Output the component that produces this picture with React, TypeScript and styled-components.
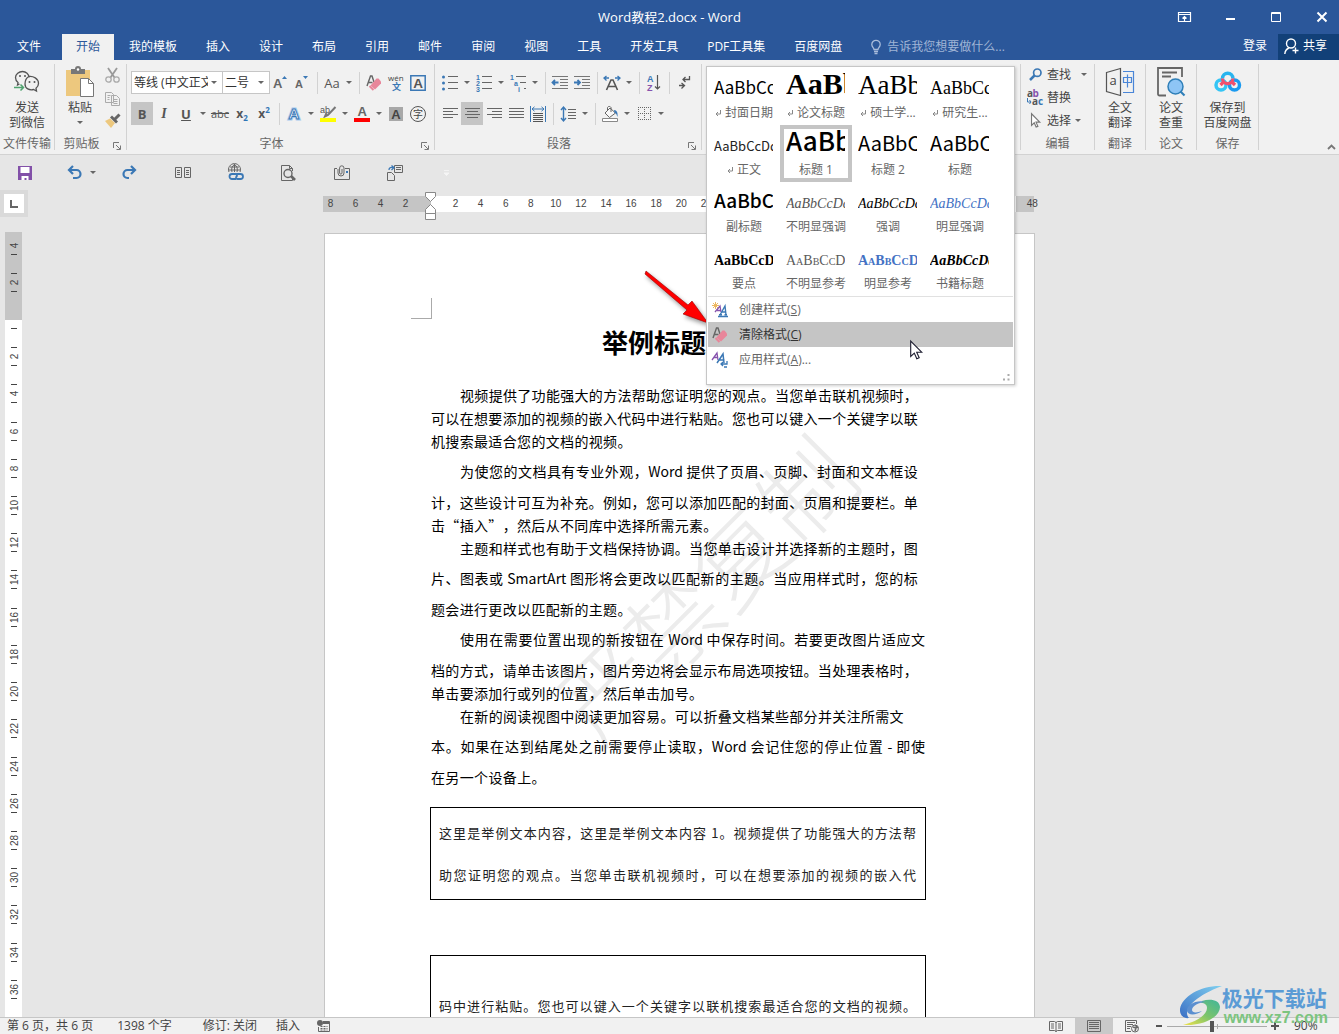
import React from 'react';
import styled, { createGlobalStyle, css } from 'styled-components';

const UI = '"Open Sans", "Noto Sans CJK SC", sans-serif';
const CJK = '"Noto Sans CJK SC", sans-serif';
const SERIF = '"Liberation Serif", "Noto Sans CJK SC", serif';

const Global = createGlobalStyle`
  *, *::before, *::after { box-sizing: border-box; }
  body { margin: 0; font: 12px/16px ${UI}; color: #444; background: #e6e6e6; overflow: hidden; }
  button, input, select { font: inherit; color: inherit; margin: 0; }
  button { padding: 0; border: 0; background: none; white-space: nowrap; }
  svg { display: block; flex: none; overflow: visible; }
  h1, p { margin: 0; }
`;

const Shell = styled.div`
  display: flex;
  flex-direction: column;
  height: 100vh;
  position: relative;
`;

/* ---------- title bar and tabs ---------- */

const TitleBar = styled.header`
  display: grid;
  grid-template-columns: 1fr auto 1fr;
  align-items: center;
  height: 34px;
  background: #2b579a;
  color: #fff;
`;
const Title = styled.span`
  grid-column: 2;
  font-size: 13px;
`;
const WindowButtons = styled.div`
  display: flex;
  justify-content: flex-end;
  gap: 12px;
`;
const WindowButton = styled.button`
  display: grid;
  place-items: center;
  width: 34px;
  height: 32px;
  color: #fff;
`;
const TabBar = styled.nav`
  display: flex;
  align-items: stretch;
  gap: 1px;
  height: 26px;
  padding-left: 3px;
  background: #2b579a;
  color: #fff;
`;
const Tab = styled.button<{ $active?: boolean; $file?: boolean }>`
  padding: 0 14px 1px;
  color: ${p => (p.$active ? '#2b579a' : '#fff')};
  background: ${p => (p.$active ? '#f1f1f1' : 'transparent')};
  margin-right: ${p => (p.$file ? 6 : 0)}px;
`;
const Search = styled.label`
  display: flex;
  align-items: center;
  gap: 6px;
  margin-left: 14px;
  color: #a9bcdb;
`;
const SearchInput = styled.input`
  width: 150px;
  padding: 0;
  border: 0;
  outline: 0;
  background: none;
  &::placeholder { color: #a0b5d6; opacity: 1; }
`;
const Account = styled.div`
  display: flex;
  margin-left: auto;
  gap: 11px;
`;
const PlainButton = styled.button`
  padding-bottom: 2px;
`;
const ShareButton = styled.button`
  display: flex;
  align-items: center;
  gap: 4px;
  width: 61px;
  padding: 0 0 2px 6px;
  background: #124078;
`;

/* ---------- ribbon ---------- */

const Ribbon = styled.section`
  display: flex;
  height: 95px;
  padding: 4px 0;
  background: #f1f1f1;
  border-bottom: 1px solid #d2d2d2;
`;
const Group = styled.div<{ $w: number }>`
  display: flex;
  flex-direction: column;
  position: relative;
  flex: 0 0 ${p => p.$w}px;
  height: 86px;
  border-right: 1px solid #d2d2d2;
`;
const GroupBody = styled.div`
  display: flex;
  flex: 1;
`;
const GroupFoot = styled.div`
  display: flex;
  height: 14px;
  margin-bottom: -1px;
  line-height: 14px;
  color: #666;
  white-space: nowrap;
`;
const GroupName = styled.span`
  flex: 1;
  display: flex;
  justify-content: center;
`;
const Launcher = styled.button`
  width: 18px;
  display: grid;
  place-items: center;
  padding-top: 4px;
`;
const BigButton = styled.button<{ $w?: number }>`
  display: flex;
  flex-direction: column;
  align-items: center;
  width: ${p => (p.$w ? p.$w + 'px' : '100%')};
  line-height: 15px;
`;
const BigIcon = styled.span`
  display: grid;
  place-items: center;
  height: 36px;
`;
const DropSlot = styled.span`
  display: grid;
  height: 14px;
  place-items: center;
`;
const ToolRow = styled.div`
  display: flex;
  align-items: center;
  height: 23px;
`;
const ToolStack = styled.div`
  display: flex;
  flex-direction: column;
  gap: 8px;
  padding: 7px 0 0 4px;
`;
const Tool = styled.button<{ $on?: boolean; $w?: number }>`
  display: grid;
  place-items: center;
  width: ${p => p.$w || 22}px;
  height: 23px;
  background: ${p => (p.$on ? '#c5c5c5' : 'transparent')};
`;
const CaretBtn = styled.button`
  display: grid;
  place-items: center;
  width: 12px;
  height: 23px;
`;
const CaretShape = styled.i`
  border: 3px solid transparent;
  border-top-color: #666;
  border-bottom: 0;
`;
const Sep = styled.i`
  width: 8px;
  height: 22px;
  background: linear-gradient(#d2d2d2, #d2d2d2) center / 1px 100% no-repeat;
`;
const Combo = styled.span<{ $w: number }>`
  position: relative;
  width: ${p => p.$w}px;
  height: 23px;
  margin-right: -1px;
`;
const ComboSelect = styled.select`
  appearance: none;
  width: 100%;
  height: 100%;
  padding: 0 14px 0 2px;
  border: 1px solid #c6c6c6;
  border-radius: 0;
  background: #fff;
  color: #333;
`;
const ComboCaret = styled.span`
  position: absolute;
  right: 6px;
  top: 10px;
  display: grid;
  pointer-events: none;
`;
const Glyph = styled.span<{ $size?: number; $bold?: boolean; $italic?: boolean; $line?: string; $serif?: boolean }>`
  font-size: ${p => p.$size || 13}px;
  font-weight: ${p => (p.$bold ? 700 : 400)};
  font-style: ${p => (p.$italic ? 'italic' : 'normal')};
  font-family: ${p => (p.$serif ? SERIF : UI)};
  text-decoration: ${p => p.$line || 'none'};
  color: #555;
  line-height: 16px;
`;
const Script = styled.small<{ $up?: boolean }>`
  font-size: 8px;
  color: #2e75b6;
  vertical-align: ${p => (p.$up ? '5px' : '-3px')};
  line-height: 1;
`;
const SideTools = styled.div`
  display: flex;
  flex-direction: column;
`;
const EditList = styled.div`
  display: flex;
  flex-direction: column;
  padding-left: 6px;
`;
const EditButton = styled.button`
  display: flex;
  align-items: center;
  gap: 4px;
  height: 23px;
  padding-bottom: 2px;
  color: #444;
`;
const EditIcon = styled.span`
  display: grid;
  place-items: center;
  width: 16px;
`;
const EditCaret = styled(CaretShape)<{ $gap?: number }>`
  margin-left: ${p => p.$gap || 0}px;
`;
const Collapse = styled.button`
  align-self: flex-end;
  margin: 0 3px 0 auto;
`;

/* ---------- styles gallery ---------- */

const Gallery = styled.div`
  position: absolute;
  z-index: 5;
  left: 4px;
  top: 2px;
  width: 309px;
  height: 319px;
  padding: 1px;
  border: 1px solid #c6c6c6;
  background: #fff;
  box-shadow: 1px 1px 3px rgba(0, 0, 0, 0.2);
`;
const Tiles = styled.div`
  display: grid;
  grid-template-columns: repeat(4, 72px);
  grid-auto-rows: 57px;
  border-bottom: 1px solid #e1e1e1;
`;
const Tile = styled.button<{ $on?: boolean }>`
  display: flex;
  flex-direction: column;
  padding: 0 6px;
  box-shadow: ${p => (p.$on ? 'inset 0 0 0 4px #c5c5c5' : 'none')};
`;
interface SampleProps {
  $size: number;
  $serif?: boolean;
  $weight?: number;
  $italic?: boolean;
  $caps?: boolean;
  $color?: string;
}
const Sample = styled.span<SampleProps>`
  display: flex;
  align-items: baseline;
  width: 59px;
  height: 33px;
  overflow: hidden;
  line-height: 1;
  color: ${p => p.$color || '#000'};
  font-family: ${p => (p.$serif ? SERIF : CJK)};
  font-size: ${p => p.$size}px;
  font-weight: ${p => p.$weight || 400};
  font-style: ${p => (p.$italic ? 'italic' : 'normal')};
  ${p => p.$caps && css`font-variant: small-caps;`}
  &::before { content: ''; width: 0; height: 26px; }
`;
const TileLabel = styled.span`
  display: flex;
  align-items: center;
  justify-content: center;
  gap: 4px;
  width: 60px;
  margin-top: 4px;
  line-height: 16px;
  color: #666;
`;
const MenuItem = styled.button<{ $on?: boolean }>`
  display: flex;
  align-items: center;
  gap: 11px;
  width: 100%;
  height: 25px;
  padding: 0 4px;
  background: ${p => (p.$on ? '#c5c5c5' : 'transparent')};
  color: ${p => (p.$on ? '#333' : '#666')};
`;
const Grip = styled.span`
  position: absolute;
  right: 4px;
  bottom: 3px;
`;
const Pointer = styled.span`
  position: absolute;
  left: 203px;
  top: 273px;
`;

/* ---------- quick access and rulers ---------- */

const QuickBar = styled.div`
  display: flex;
  height: 35px;
`;
const QuickButton = styled.button<{ $w?: number; $start?: boolean }>`
  display: flex;
  align-items: center;
  justify-content: ${p => (p.$start ? 'flex-start' : 'center')};
  gap: 8px;
  width: ${p => p.$w || 53}px;
  padding-left: ${p => (p.$start ? 17 : 0)}px;
`;
const RulerRow = styled.div`
  display: flex;
  align-items: center;
  height: 27px;
`;
const TabSelector = styled.button`
  display: grid;
  place-items: center;
  width: 28px;
  height: 27px;
  border: 4px solid #dadada;
  background: #fff;
`;
const RulerTrack = styled.div`
  display: flex;
  flex: 1;
  justify-content: center;
  padding-right: 10px;
`;
const Ruler = styled.div`
  display: flex;
  position: relative;
  width: 711px;
  height: 16px;
  font: 10px/16px "Liberation Sans", sans-serif;
  color: #444;
  background: linear-gradient(90deg, #c5c5c5 108px, #fff 108px, #fff 693px, #c5c5c5 693px);
`;
const RulerNumbers = styled.div<{ $w: number; $ml: number }>`
  display: flex;
  flex: 0 0 ${p => p.$w}px;
  margin-left: ${p => p.$ml}px;
  text-align: center;
`;
const RulerCell = styled.span`
  flex: 1;
`;
const IndentMark = styled.span`
  position: absolute;
  left: 102px;
  top: -4px;
`;

/* ---------- workspace ---------- */

const Workspace = styled.main`
  display: flex;
  flex: 1;
  min-height: 0;
  overflow: hidden;
`;
const VRuler = styled.div`
  flex: none;
  width: 17px;
  margin: 15px 0 0 5px;
  background: #fff;
  font: 10px/16px "Liberation Sans", sans-serif;
  color: #444;
`;
const VMargin = styled.div`
  height: 88px;
  padding-bottom: 10px;
  background: #c5c5c5;
  overflow: hidden;
  display: flex;
  flex-direction: column;
  justify-content: flex-end;
  align-items: center;
`;
const VMarginNumbers = styled.div`
  display: flex;
  flex: none;
  flex-direction: column;
  height: 74px;
  margin-bottom: 9px;
`;
const VScale = styled.div`
  display: flex;
  flex-direction: column;
  align-items: center;
  padding-top: 8px;
`;
const VNumbers = styled.div<{ $h: number }>`
  display: flex;
  flex-direction: column;
  height: ${p => p.$h}px;
  margin: 9px 0;
`;
const VCell = styled.div`
  display: flex;
  flex: 1;
  flex-direction: column;
  align-items: center;
  justify-content: center;
`;
const Tick = styled.i<{ $blank?: boolean }>`
  width: 6px;
  height: 1px;
  background: ${p => (p.$blank ? 'transparent' : '#444')};
`;
const VNum = styled.span`
  height: 17px;
  width: 16px;
  display: grid;
  place-items: center;
  transform: rotate(-90deg);
`;
const Canvas = styled.div`
  flex: 1;
  display: flex;
  justify-content: center;
  padding: 16px 2px 0 0;
`;
const Page = styled.article`
  position: relative;
  width: 711px;
  height: 1000px;
  padding: 88px 106px 0;
  border: 1px solid #c6c6c6;
  background: #fff;
  color: #000;
  font-family: ${CJK};
  text-spacing-trim: space-all;
`;
const Corner = styled.i`
  position: absolute;
  left: 86px;
  top: 64px;
  width: 21px;
  height: 21px;
  border: solid #aaa;
  border-width: 0 1px 1px 0;
`;
const Heading = styled.h1`
  padding-left: 171px;
  margin-bottom: 22px;
  font-size: 26px;
  line-height: 40px;
  font-weight: 700;
`;
const Body = styled.div`
  position: relative;
  width: 494px;
  font-size: 14px;
  line-height: 23px;
`;
const Line = styled.span<{ $cells: number; $lead?: number; $indent?: boolean }>`
  display: block;
  width: ${p => (p.$cells / 34.5) * 100}%;
  padding-top: ${p => p.$lead || 0}px;
  padding-left: ${p => (p.$indent ? 29 : 0)}px;
  text-align: justify;
  text-align-last: justify;
`;
const Frame = styled.div<{ $top: number; $pad: number; $tall?: boolean }>`
  position: relative;
  width: 496px;
  margin: ${p => p.$top}px 0 0 -1px;
  padding: ${p => p.$pad}px 9px 0 8px;
  height: ${p => (p.$tall ? 120 : 93)}px;
  border: 1px solid #000;
  font-size: 13px;
  line-height: 42px;
  color: #222;
`;
const FrameLine = styled.p`
  text-align: justify;
  text-align-last: justify;
`;
const Stamp = styled.span`
  position: absolute;
  left: 190px;
  top: 292px;
  font-size: 94px;
  font-weight: 300;
  line-height: 120px;
  color: #ececec;
  white-space: nowrap;
  transform: rotate(-45deg);
`;
const Arrow = styled.span`
  position: absolute;
  left: 320px;
  top: 37px;
  filter: drop-shadow(2px 3px 2px rgba(0, 0, 0, 0.4));
`;

/* ---------- status bar ---------- */

const StatusBar = styled.footer`
  display: flex;
  align-items: center;
  height: 17px;
  padding-left: 7px;
  border-top: 1px solid #c6c6c6;
  background: #f1f1f1;
  line-height: 16px;
`;
const StatusText = styled.span<{ $gap: number }>`
  margin-right: ${p => p.$gap}px;
  white-space: nowrap;
`;
const ViewButtons = styled.div`
  display: flex;
  margin-left: auto;
`;
const ViewButton = styled.button<{ $on?: boolean }>`
  display: grid;
  place-items: center;
  width: 38px;
  height: 16px;
  background: ${p => (p.$on ? '#c9c9c9' : 'transparent')};
`;
const ZoomButton = styled.button`
  display: grid;
  place-items: center;
  width: 16px;
  height: 16px;
`;
const ZoomRange = styled.input`
  appearance: none;
  width: 100px;
  height: 12px;
  background: linear-gradient(#aaa, #aaa) center / 100% 1px no-repeat, linear-gradient(#aaa, #aaa) center / 1px 5px no-repeat;
  &::-webkit-slider-thumb { appearance: none; width: 4px; height: 11px; background: #555; }
`;
const ZoomValue = styled.span`
  width: 56px;
  padding-left: 11px;
`;
const SiteMark = styled.div`
  position: absolute;
  right: 11px;
  bottom: 7px;
  display: flex;
  align-items: center;
`;
const SiteText = styled.div`
  display: flex;
  flex-direction: column;
  white-space: nowrap;
`;
const SiteName = styled.span`
  font: 700 21px/24px ${CJK};
  color: #5b9bd5;
`;
const SiteUrl = styled.span`
  padding-left: 2px;
  font: 700 16px/18px "Liberation Sans", sans-serif;
  color: #7cc47f;
`;

/* ---------- icons ---------- */

const Svg = ({ w, h, children }: { w: number; h: number; children: React.ReactNode }) => (
  <svg width={w} height={h} viewBox={`0 0 ${w} ${h}`} fill="none" aria-hidden="true">{children}</svg>
);
const G = '#666';
const B = '#3b78b5';

const WeChat = () => (
  <Svg w={26} h={24}>
    <path d="M15 7.500C15 4 12 1.500 8.500 1.500S1.500 4 1.500 7.500c0 2 1 3.800 2.500 5L3.500 15l2-1M15 6.500c4-.5 9.500 1.800 9.500 7 0 2-1 3.500-2.500 4.700l.5 2.800-3-1.500c-4 1-8.500-.8-8.500-5.500 0-4 2-6.500 4-7.500z" stroke="#555" strokeWidth="1.300" />
    <path d="M0 17.500h9M6.500 14.500l3 3-3 3" stroke="#4fa36f" strokeWidth="1.500" />
    <circle cx="6" cy="6" r="1" fill="#555" /><circle cx="11" cy="6" r="1" fill="#555" />
    <circle cx="15.500" cy="12" r="1" fill="#555" /><circle cx="20.500" cy="12" r="1" fill="#555" />
  </Svg>
);
const Paste = () => (
  <Svg w={28} h={30}>
    <path d="M0 3h24v26H0z" fill="#edc87e" /><path d="M5 2h4a3 3 0 0 1 6 0h4v5H5z" fill="#777" /><circle cx="12" cy="2.500" r="1.200" fill="#fff" />
    <path d="M14.500 11.500h8l5 5v13h-13z" fill="#fff" stroke="#777" /><path d="M22.500 11.500v5h5" stroke="#777" />
  </Svg>
);
const Scissors = () => (
  <Svg w={15} h={15}>
    <path d="M3 0l6.500 9.500M12 0L5.500 9.500" stroke="#999" strokeWidth="1.800" /><circle cx="3.500" cy="11.500" r="2.700" stroke="#aaa" strokeWidth="1.300" /><circle cx="11.500" cy="11.500" r="2.700" stroke="#aaa" strokeWidth="1.300" />
  </Svg>
);
const Copy = () => (
  <Svg w={15} h={14}>
    <path d="M.5.500h6l2 2v8h-8zM6.500 3.500h5l3 3v7h-8z" fill="#f1f1f1" stroke="#aaa" /><path d="M2.500 3.500h3M2.500 5.500h2M2.500 7.500h2M8.500 7.500h4M8.500 9.500h4M8.500 11.500h4" stroke="#aaa" />
  </Svg>
);
const Painter = () => (
  <Svg w={16} h={15}>
    <path d="M0 7l5-2.500L10 9l-4 5z" fill="#edc87e" /><path d="M5 3.500l6 6 2-2-6-6z" fill="#666" /><path d="M9.500 5.500l5-5" stroke="#666" strokeWidth="3" />
  </Svg>
);
const Eraser = () => (
  <Svg w={16} h={16}>
    <path d="M1 11L4.500 1h1.500l2 6M2.500 7.500h4" stroke="#666" strokeWidth="1.400" /><path d="M10.500 3.500h2l2.500 3v2L9 14.500l-4.500-4z" fill="#e8869a" /><path d="M3.500 11l4 4" stroke="#e8869a" strokeWidth="2" />
  </Svg>
);
const LauncherIcon = () => (
  <Svg w={8} h={8}><path d="M.5 6V.500H6M3 3l4 4M7.500 3.500v4h-4" stroke="#777" /></Svg>
);
const Lines = ({ rows }: { rows: number[][] }) => (
  <Svg w={15} h={13}>{rows.map(([a, b], i) => <path key={i} d={`M${a} ${i * 3 + 1.5}H${b}`} stroke="#666" />)}</Svg>
);
const ListIcon = ({ marks, indent }: { marks?: string[]; indent?: boolean }) => (
  <Svg w={16} h={16}>
    {[2, 8, 14].map((y, i) => {
      const x = indent ? i * 4 : 0;
      return (
        <g key={y}>
          {marks ? <text x={x} y={y + 2.5} fontSize="7" fontWeight="700" fontFamily="Liberation Sans" fill={B}>{marks[i]}</text> : <circle cx="1.500" cy={y} r="1.500" fill={B} />}
          <path d={`M${x + 6} ${y - 0.5}H16`} stroke="#666" />
        </g>
      );
    })}
  </Svg>
);
const IndentIcon = ({ right }: { right?: boolean }) => (
  <Svg w={16} h={13}>
    <path d="M0 .5h16M8 3.500h8M8 6.500h8M8 9.500h8M0 12.500h16" stroke="#777" />
    <path d={right ? 'M0 6.500h6M3.500 4l2.500 2.500L3.500 9' : 'M6.500 6.500h-6M3 4L.5 6.500 3 9'} stroke={B} strokeWidth="1.800" />
  </Svg>
);
const Distribute = () => (
  <Svg w={16} h={16}><path d="M.5 0v16M15.500 0v16M2 3h12M4.500.800L2 3l2.500 2.200M11.500.800L14 3l-2.500 2.200" stroke={B} /><path d="M3 7.500h10M3 9.500h10M3 11.500h10M3 13.500h10M3 15.500h10" stroke="#555" /></Svg>
);
const AsianLayout = () => (
  <Svg w={18} h={16}><path d="M3.500 15L8 5h2l4.500 10M5.500 11.500h7" stroke="#555" strokeWidth="1.600" /><path d="M6 3H1M3.500 1L1 3l2.500 2.500M12 3h5M14.500 1L17 3l-2.500 2.500" stroke={B} strokeWidth="1.300" /></Svg>
);
const SortIcon = () => (
  <Svg w={14} h={16}>
    <text x="0" y="7" fontSize="9" fontWeight="700" fontFamily="Liberation Sans" fill={B}>A</text><text x="0" y="15.500" fontSize="9" fontWeight="700" fontFamily="Liberation Sans" fill="#8653ad">Z</text>
    <path d="M10.500 0v14M8 11.500l2.500 2.500 2.500-2.500" stroke="#555" strokeWidth="1.200" />
  </Svg>
);
const MarksIcon = () => (
  <Svg w={11} h={14}><path d="M10.500 0v3.500H4M6.500 1L4 3.500 6.500 6M0 9.500h5M2.500 7l3 2.500-3 3" stroke="#555" strokeWidth="1.300" /></Svg>
);
const Spacing = () => (
  <Svg w={15} h={16}><path d="M2.500 1v14M0 4l2.500-3L5 4M0 12l2.500 3L5 12" stroke={B} strokeWidth="1.400" /><path d="M7 3.500h8M7 6.500h8M7 9.500h8M7 12.500h8" stroke="#666" /></Svg>
);
const Bucket = () => (
  <Svg w={17} h={16}><path d="M3 7l5-5 5.500 5-6 4.500zM5.500 4.500V1.500a2 2 0 0 1 3.500 0V6" fill="#f8f8f8" stroke="#666" /><path d="M12 4c3 0 4 3 3.500 7-1-2-1-4-3-4z" fill={B} /><path d="M.5 12.500h15v3H.5z" fill="#fff" stroke="#888" /></Svg>
);
const Borders = () => (
  <Svg w={13} h={13}><path d="M0 .5h13M0 12.500h13M0 6.500h13M.5 0v13M12.500 0v13M6.500 0v13" stroke="#666" strokeDasharray="1 1" /></Svg>
);
const Highlight = () => (
  <Svg w={17} h={17}><text x="0" y="7.500" fontSize="9" fontFamily="Liberation Sans" fill="#555">ab</text><path d="M15.500 2L8 10l-3 1.500L6.500 8" stroke="#777" strokeWidth="2" /><path d="M0 13h16v4H0z" fill="#ff0" /></Svg>
);
const FontColor = () => (
  <Svg w={16} h={17}><text x="3.500" y="11" fontSize="13" fontWeight="700" fontFamily="Liberation Sans" fill="#666">A</text><path d="M0 13h16v4H0z" fill="#f00" /></Svg>
);
const BoxedA = () => (
  <Svg w={16} h={16}><path d="M.8.800h14.400v14.400H.8z" stroke={B} strokeWidth="1.500" /><text x="3.200" y="13" fontSize="13.500" fontWeight="700" fontFamily="Liberation Sans" fill="#555">A</text></Svg>
);
const ShadedA = () => (
  <Svg w={14} h={14}><path d="M0 0h14v14H0z" fill="#a8a8a8" /><text x="2.300" y="12" fontSize="13" fontWeight="700" fontFamily="Liberation Sans" fill="#444">A</text></Svg>
);
const CircledZi = () => (
  <Svg w={16} h={16}><circle cx="8" cy="8" r="7.500" stroke="#555" /><text x="3" y="11.800" fontSize="10" fontFamily="Noto Sans CJK SC" fill="#444">字</text></Svg>
);
const GlowA = () => (
  <Svg w={14} h={15}><text x="1.500" y="12.500" fontSize="15" fontWeight="700" fontFamily="Liberation Sans" fill="#fff" stroke="#a9cbee" strokeWidth="3">A</text><text x="1.500" y="12.500" fontSize="15" fontWeight="700" fontFamily="Liberation Sans" fill="#fff" stroke={B}>A</text></Svg>
);
const Phonetic = () => (
  <Svg w={17} h={17}><text x="0" y="6.500" fontSize="8" fontFamily="Open Sans" fill="#444">wén</text><text x="4" y="15.500" fontSize="9" fontWeight="700" fontFamily="Noto Sans CJK SC" fill={B}>文</text></Svg>
);
const SizeA = ({ down }: { down?: boolean }) => (
  <Svg w={14} h={16}><text x="0" y="13" fontSize={down ? 11 : 13} fontWeight="700" fontFamily="Liberation Sans" fill="#666">A</text><path d={down ? 'M8 1h5L10.500 4z' : 'M9 4h5L11.500 1z'} fill={B} /></Svg>
);
const FindIcon = () => (
  <Svg w={13} h={13}><circle cx="8.300" cy="4.700" r="3.700" stroke={B} strokeWidth="1.700" /><path d="M5.500 7.500L1 12" stroke={B} strokeWidth="2.500" /></Svg>
);
const ReplaceIcon = () => (
  <Svg w={16} h={16}>
    <text x="0" y="7" fontSize="10" fontWeight="700" fontFamily="Open Sans" fill="#555">a</text><text x="5.500" y="7" fontSize="10" fontWeight="700" fontFamily="Open Sans" fill="#8653ad">b</text>
    <text x="5" y="15" fontSize="10" fontWeight="700" fontFamily="Open Sans" fill="#555">a</text><text x="11" y="15" fontSize="10" fontWeight="700" fontFamily="Open Sans" fill={B}>c</text><path d="M.5 8v4H4M2.500 10L4 12l-1.500 2" stroke={B} />
  </Svg>
);
const CursorIcon = ({ big }: { big?: boolean }) => (
  <svg width={big ? 12 : 9} height={big ? 20 : 15} viewBox="0 0 12 20" fill="none"><path d="M.7 1v15.500l3.600-3.400 2.500 5.700 2.400-1-2.500-5.600h5z" fill="#fff" stroke={big ? '#1b1b2e' : '#777'} strokeWidth={big ? 1.1 : 1.5} /></svg>
);
const TranslateIcon = () => (
  <Svg w={28} h={28}><path d="M.5 4.500l14-4v27l-14-4z" stroke="#555" strokeWidth="1.200" /><text x="3.500" y="17" fontSize="13" fontFamily="Open Sans" fill="#444">a</text><path d="M17 3.500h10.500v21H17" stroke="#4a86d8" strokeWidth="1.200" /><path d="M17.500 9.500h8v5h-8zM21.500 6.500v13" stroke="#4a86d8" strokeWidth="1.200" /></Svg>
);
const CheckIcon = () => (
  <Svg w={28} h={30}><path d="M9 28.500H2.500a1.500 1.500 0 0 1-1.500-1.500V1h24v9M5 5.500h15M5 9.500h9" stroke="#666" strokeWidth="1.800" /><circle cx="18.500" cy="19.500" r="7.500" fill="#8ec5f5" stroke="#2f7fb8" strokeWidth="1.500" /><path d="M23.500 24.500l4 4" stroke="#2f7fb8" strokeWidth="2.200" /></Svg>
);
const NetdiskIcon = () => (
  <Svg w={28} h={22}>
    <circle cx="7" cy="14" r="5" stroke="#35c5f5" strokeWidth="3.500" /><circle cx="20.500" cy="14" r="5" stroke="#1a9af0" strokeWidth="3.500" />
    <path d="M8.500 7.500a5.200 5.200 0 0 1 10.400 0" stroke="#28b4ee" strokeWidth="3.500" />
    <path d="M8.500 7.500a5.200 5.200 0 0 0 10.400 0M9.500 11l-3 3M18 11l3 3" stroke="#f0506e" strokeWidth="3.200" />
  </Svg>
);
const NewStyle = () => (
  <Svg w={16} h={16}><path d="M3.500 0v7M0 3.500h7M1 1l5 5M6 1L1 6" stroke="#edb75f" /><path d="M3 10l5-6 1 6M5 8.500h4" stroke="#8653ad" strokeWidth="1.300" /><path d="M8 13l5-9 1 9M10 10h4M6 14.500h10M7 12.700h3M12.500 12.700H15" stroke={B} strokeWidth="1.400" /></Svg>
);
const ApplyStyle = () => (
  <Svg w={16} h={16}><path d="M0 8l5-7 1 7M2 5.500h4" stroke="#8653ad" strokeWidth="1.300" /><path d="M5 11l6-9 1 9M7.500 8h5" stroke={B} strokeWidth="1.500" /><path d="M15 9v3H9M11 10l-2 2 2 2M12 15h3" stroke={B} strokeWidth="1.300" /></Svg>
);
const ReturnMark = () => (
  <Svg w={6} h={7}><path d="M5.500 0v4H1M3 2L1 4l2 2" stroke="#888" /></Svg>
);

/* ---------- data ---------- */

const tabs = ['我的模板', '插入', '设计', '布局', '引用', '邮件', '审阅', '视图', '工具', '开发工具', 'PDF工具集', '百度网盘'];

interface StyleTile extends SampleProps { name: string; text: string; mark?: boolean; on?: boolean }
const tiles: StyleTile[] = [
  { name: '封面日期', text: 'AaBbCc', $size: 17, mark: true },
  { name: '论文标题', text: 'AaBb', $size: 30, $serif: true, $weight: 700, mark: true },
  { name: '硕士学...', text: 'AaBb', $size: 27, $serif: true, mark: true },
  { name: '研究生...', text: 'AaBbCc', $size: 18, $serif: true, mark: true },
  { name: '正文', text: 'AaBbCcDd', $size: 13, $color: '#222', mark: true },
  { name: '标题 1', text: 'AaBb', $size: 26, $weight: 500, on: true },
  { name: '标题 2', text: 'AaBbC', $size: 20 },
  { name: '标题', text: 'AaBbC', $size: 20 },
  { name: '副标题', text: 'AaBbC', $size: 19, $weight: 500 },
  { name: '不明显强调', text: 'AaBbCcDd', $size: 14, $serif: true, $italic: true, $color: '#555' },
  { name: '强调', text: 'AaBbCcDd', $size: 14, $serif: true, $italic: true },
  { name: '明显强调', text: 'AaBbCcDd', $size: 14, $serif: true, $italic: true, $color: '#4472c4' },
  { name: '要点', text: 'AaBbCcD', $size: 14, $serif: true, $weight: 700 },
  { name: '不明显参考', text: 'AaBbCcDd', $size: 14, $serif: true, $caps: true, $color: '#5a5a5a' },
  { name: '明显参考', text: 'AaBbCcDd', $size: 14, $serif: true, $weight: 700, $caps: true, $color: '#4472c4' },
  { name: '书籍标题', text: 'AaBbCcDd', $size: 14, $serif: true, $weight: 700, $italic: true },
];

interface DocLine { t: string; c: number; lead?: number }
const paragraphs: DocLine[][] = [
  [
    { t: '视频提供了功能强大的方法帮助您证明您的观点。当您单击联机视频时，', c: 34 },
    { t: '可以在想要添加的视频的嵌入代码中进行粘贴。您也可以键入一个关键字以联', c: 34 },
    { t: '机搜索最适合您的文档的视频。', c: 14 },
  ],
  [
    { t: '为使您的文档具有专业外观，Word 提供了页眉、页脚、封面和文本框设', c: 34, lead: 7 },
    { t: '计，这些设计可互为补充。例如，您可以添加匹配的封面、页眉和提要栏。单', c: 34, lead: 8 },
    { t: '击“插入”，然后从不同库中选择所需元素。', c: 20 },
  ],
  [
    { t: '主题和样式也有助于文档保持协调。当您单击设计并选择新的主题时，图', c: 34 },
    { t: '片、图表或 SmartArt 图形将会更改以匹配新的主题。当应用样式时，您的标', c: 34, lead: 7 },
    { t: '题会进行更改以匹配新的主题。', c: 14, lead: 8 },
  ],
  [
    { t: '使用在需要位置出现的新按钮在 Word 中保存时间。若要更改图片适应文', c: 34.5, lead: 7 },
    { t: '档的方式，请单击该图片，图片旁边将会显示布局选项按钮。当处理表格时，', c: 34, lead: 8 },
    { t: '单击要添加行或列的位置，然后单击加号。', c: 19 },
  ],
  [
    { t: '在新的阅读视图中阅读更加容易。可以折叠文档某些部分并关注所需文', c: 33 },
    { t: '本。如果在达到结尾处之前需要停止读取，Word 会记住您的停止位置 - 即使', c: 34.5, lead: 7 },
    { t: '在另一个设备上。', c: 8, lead: 8 },
  ],
];

const evens = (n: number) => Array.from({ length: n }, (_, i) => (i + 1) * 2);
/* numbers behind the open gallery stay blank */
const hiddenByGallery = (n: number) => n > 22 && n < 48;
const Caret = () => <CaretBtn aria-label="更多"><CaretShape /></CaretBtn>;
const Foot = ({ name, launch }: { name: string; launch?: boolean }) => (
  <GroupFoot><GroupName>{name}</GroupName>{launch && <Launcher aria-label={name}><LauncherIcon /></Launcher>}</GroupFoot>
);

const BigGroup = ({ w, icon, a, b, name }: { w: number; icon: React.ReactNode; a: string; b: string; name: string }) => (
  <Group $w={w}>
    <GroupBody><BigButton><BigIcon>{icon}</BigIcon>{a}<br />{b}</BigButton></GroupBody>
    <Foot name={name} />
  </Group>
);

const StylesGallery = () => (
  <Gallery>
    <Tiles>
      {tiles.map(({ name, text, mark, on, ...s }) => (
        <Tile key={name} $on={on}>
          <Sample {...s}>{text}</Sample>
          <TileLabel>{mark && <ReturnMark />}{name}</TileLabel>
        </Tile>
      ))}
    </Tiles>
    <MenuItem><NewStyle /><span>创建样式(<u>S</u>)</span></MenuItem>
    <MenuItem $on><Eraser /><span>清除格式(<u>C</u>)</span></MenuItem>
    <MenuItem><ApplyStyle /><span>应用样式(<u>A</u>)...</span></MenuItem>
    <Grip><Svg w={7} h={7}><path d="M4.500 0h2v2h-2zM0 4.500h2v2H0zM4.500 4.500h2v2h-2z" fill="#aaa" /></Svg></Grip>
    <Pointer><CursorIcon big /></Pointer>
  </Gallery>
);

const FontGroup = () => (
  <Group $w={308}>
    <GroupBody>
      <ToolStack>
        <ToolRow>
          <Combo $w={92}><ComboSelect aria-label="字体"><option>等线 (中文正文)</option></ComboSelect><ComboCaret><CaretShape /></ComboCaret></Combo>
          <Combo $w={48}><ComboSelect aria-label="字号"><option>二号</option></ComboSelect><ComboCaret><CaretShape /></ComboCaret></Combo>
          <Tool aria-label="增大字号"><SizeA /></Tool>
          <Tool aria-label="减小字号"><SizeA down /></Tool>
          <Sep />
          <Tool><Glyph>Aa</Glyph></Tool><Caret />
          <Sep />
          <Tool aria-label="清除格式"><Eraser /></Tool>
          <Tool aria-label="拼音"><Phonetic /></Tool>
          <Tool aria-label="字符边框"><BoxedA /></Tool>
        </ToolRow>
        <ToolRow>
          <Tool $on><Glyph $bold>B</Glyph></Tool>
          <Tool><Glyph $size={14} $bold $italic $serif>I</Glyph></Tool>
          <Tool><Glyph $bold $line="underline">U</Glyph></Tool><Caret />
          <Tool><Glyph $size={11} $line="line-through">abc</Glyph></Tool>
          <Tool><Glyph $size={12} $bold>x<Script>2</Script></Glyph></Tool>
          <Tool><Glyph $size={12} $bold>x<Script $up>2</Script></Glyph></Tool>
          <Sep />
          <Tool aria-label="文本效果"><GlowA /></Tool><Caret />
          <Tool aria-label="突出显示"><Highlight /></Tool><Caret />
          <Tool aria-label="字体颜色"><FontColor /></Tool><Caret />
          <Tool aria-label="字符底纹"><ShadedA /></Tool>
          <Tool aria-label="带圈字符"><CircledZi /></Tool>
        </ToolRow>
      </ToolStack>
    </GroupBody>
    <Foot name="字体" launch />
  </Group>
);

const ParagraphGroup = () => (
  <Group $w={267}>
    <GroupBody>
      <ToolStack>
        <ToolRow>
          <Tool aria-label="项目符号"><ListIcon /></Tool><Caret />
          <Tool aria-label="编号"><ListIcon marks={['1', '2', '3']} /></Tool><Caret />
          <Tool aria-label="多级列表"><ListIcon marks={['1', 'a', 'i']} indent /></Tool><Caret />
          <Sep />
          <Tool aria-label="减少缩进"><IndentIcon /></Tool>
          <Tool aria-label="增加缩进"><IndentIcon right /></Tool>
          <Sep />
          <Tool aria-label="中文版式"><AsianLayout /></Tool><Caret />
          <Sep />
          <Tool aria-label="排序"><SortIcon /></Tool>
          <Sep />
          <Tool aria-label="编辑标记"><MarksIcon /></Tool>
        </ToolRow>
        <ToolRow>
          <Tool aria-label="左对齐"><Lines rows={[[0, 15], [0, 10], [0, 15], [0, 10]]} /></Tool>
          <Tool $on aria-label="居中"><Lines rows={[[0, 15], [2, 13], [0, 15], [2, 13]]} /></Tool>
          <Tool aria-label="右对齐"><Lines rows={[[0, 15], [5, 15], [0, 15], [5, 15]]} /></Tool>
          <Tool aria-label="两端对齐"><Lines rows={[[0, 15], [0, 15], [0, 15], [0, 15]]} /></Tool>
          <Tool aria-label="分散对齐"><Distribute /></Tool>
          <Sep />
          <Tool aria-label="行距"><Spacing /></Tool><Caret />
          <Sep />
          <Tool aria-label="底纹"><Bucket /></Tool><Caret />
          <Tool aria-label="边框"><Borders /></Tool><Caret />
        </ToolRow>
      </ToolStack>
    </GroupBody>
    <Foot name="段落" launch />
  </Group>
);

const DocumentPage = () => (
  <Page>
    <Stamp>严禁复制</Stamp>
    <Corner />
    <Heading>举例标题</Heading>
    <Body>
      {paragraphs.map((p, i) => (
        <p key={i}>
          {p.map((l, j) => <Line key={j} $cells={l.c} $lead={l.lead} $indent={j === 0}>{l.t}</Line>)}
        </p>
      ))}
    </Body>
    <Frame $top={18} $pad={4}>
      <FrameLine>这里是举例文本内容，这里是举例文本内容 1。视频提供了功能强大的方法帮</FrameLine>
      <FrameLine>助您证明您的观点。当您单击联机视频时，可以在想要添加的视频的嵌入代</FrameLine>
    </Frame>
    <Frame $top={55} $pad={29} $tall>
      <FrameLine>码中进行粘贴。您也可以键入一个关键字以联机搜索最适合您的文档的视频。</FrameLine>
    </Frame>
    <Arrow>
      <Svg w={64} h={54}><path d="M1 0L43 34l4-4 16 22-25-9 4-4L0 3z" fill="#f00" stroke="#900" strokeWidth=".6" /></Svg>
    </Arrow>
  </Page>
);

export default function App() {
  return (
    <Shell>
      <Global />
      <TitleBar>
        <Title>Word教程2.docx - Word</Title>
        <WindowButtons>
          <WindowButton aria-label="功能区显示选项"><Svg w={13} h={10}><path d="M.5.500h12v9H.5zM.5 2.500h12M6.500 9V4.500M4.500 6.500l2-2 2 2" stroke="#fff" strokeWidth="1.200" /></Svg></WindowButton>
          <WindowButton aria-label="最小化"><Svg w={9} h={6}><path d="M0 5h9" stroke="#fff" strokeWidth="2" /></Svg></WindowButton>
          <WindowButton aria-label="最大化"><Svg w={10} h={10}><path d="M.5.500h9v9h-9zM0 1.500h10" stroke="#fff" /></Svg></WindowButton>
          <WindowButton aria-label="关闭"><Svg w={10} h={10}><path d="M.5.500l9 9M9.500.500l-9 9" stroke="#fff" strokeWidth="2" /></Svg></WindowButton>
        </WindowButtons>
      </TitleBar>
      <TabBar>
        <Tab $file>文件</Tab>
        <Tab $active>开始</Tab>
        {tabs.map(t => <Tab key={t}>{t}</Tab>)}
        <Search>
          <Svg w={10} h={14}><path d="M3 9.500C3 8 .8 7 .8 4.500a4.200 4.200 0 0 1 8.400 0C9.200 7 7 8 7 9.500zM3 11.500h4M3.500 13.500h3" stroke="#a9bcdb" strokeWidth="1.300" /></Svg>
          <SearchInput aria-label="操作说明搜索" placeholder="告诉我您想要做什么..." />
        </Search>
        <Account>
          <PlainButton>登录</PlainButton>
          <ShareButton>
            <Svg w={15} h={16}><circle cx="7" cy="5.500" r="4.500" stroke="#fff" strokeWidth="1.400" /><path d="M.8 16c.3-3 1.800-5 4-6M11.500 9.500v6M8.500 12.500h6" stroke="#fff" strokeWidth="1.400" /></Svg>
            共享
          </ShareButton>
        </Account>
      </TabBar>
      <Ribbon>
        <BigGroup w={55} icon={<WeChat />} a="发送" b="到微信" name="文件传输" />
        <Group $w={72}>
          <GroupBody>
            <BigButton $w={50}><BigIcon><Paste /></BigIcon>粘贴<DropSlot><CaretShape /></DropSlot></BigButton>
            <SideTools>
              <Tool $w={14} aria-label="剪切"><Scissors /></Tool>
              <Tool $w={14} aria-label="复制"><Copy /></Tool>
              <Tool $w={14} aria-label="格式刷"><Painter /></Tool>
            </SideTools>
          </GroupBody>
          <Foot name="剪贴板" launch />
        </Group>
        <FontGroup />
        <ParagraphGroup />
        <Group $w={319}><StylesGallery /></Group>
        <Group $w={74}>
          <GroupBody>
            <EditList>
              <EditButton><EditIcon><FindIcon /></EditIcon>查找<EditCaret $gap={6} /></EditButton>
              <EditButton><EditIcon><ReplaceIcon /></EditIcon>替换</EditButton>
              <EditButton><EditIcon><CursorIcon /></EditIcon>选择<EditCaret /></EditButton>
            </EditList>
          </GroupBody>
          <Foot name="编辑" />
        </Group>
        <BigGroup w={51} icon={<TranslateIcon />} a="全文" b="翻译" name="翻译" />
        <BigGroup w={51} icon={<CheckIcon />} a="论文" b="查重" name="论文" />
        <BigGroup w={62} icon={<NetdiskIcon />} a="保存到" b="百度网盘" name="保存" />
        <Collapse aria-label="折叠功能区"><Svg w={9} h={6}><path d="M1 5l3.500-3.500L8 5" stroke="#777" strokeWidth="1.800" /></Svg></Collapse>
      </Ribbon>
      <QuickBar>
        <QuickButton $w={50} aria-label="保存"><Svg w={14} h={14}><path d="M0 0h14v14H0z" fill="#8250a8" /><path d="M2.500 1h9v6h-9zM3.500 10h7v4h-2v-2h-2v2h-3z" fill="#fff" /></Svg></QuickButton>
        <QuickButton $start aria-label="撤消"><Svg w={15} h={13}><path d="M2 4h7.500a4 4 0 0 1 0 8H6M6 0L2 4l4 4" stroke={B} strokeWidth="2.200" /></Svg><CaretShape /></QuickButton>
        <QuickButton aria-label="恢复"><Svg w={15} h={13}><path d="M13 4H5.500a4 4 0 0 0 0 8H7M9 0l4 4-4 4" stroke={B} strokeWidth="2.200" /></Svg></QuickButton>
        <QuickButton aria-label="阅读"><Svg w={16} h={11}><path d="M.5.500h6v10h-6zM9.500.500h6v10h-6zM2 3.500h3M2 5.500h3M2 7.500h3M11 3.500h3M11 5.500h3M11 7.500h3" stroke={G} /></Svg></QuickButton>
        <QuickButton aria-label="超链接"><Svg w={16} h={17}><path d="M1 8a6 6 0 1 1 11 0M.5 6h12M6.500 0v8M2 3h9M4 8c-1-3 0-6 2.500-7.500C9 2 10 5 9 8" stroke={G} /><path d="M8 15H4a2.500 2.500 0 0 1 0-5h3.500c2 0 2 3 0 3.500M8.500 10h4a2.500 2.500 0 0 1 0 5H9.500c-2 0-2-2.500 0-3.500" stroke={B} strokeWidth="1.800" /></Svg></QuickButton>
        <QuickButton aria-label="打印预览"><Svg w={15} h={16}><path d="M5 15.500H.5V.500h8l3 3V6M8.500.500v3h3M2 15.500h9.500V14" stroke={G} /><circle cx="7" cy="8.500" r="4" stroke={G} strokeWidth="1.400" /><path d="M10 11l4 4" stroke={G} strokeWidth="2.600" /></Svg></QuickButton>
        <QuickButton aria-label="电子邮件"><Svg w={16} h={15}><path d="M3 3.500H.5v11h15v-11H11" stroke={G} /><path d="M4 4v4a3 3 0 0 0 6 0V3a2.200 2.200 0 0 0-4.400 0v5c0 1.500 2.400 1.500 2.400 0V4" stroke={G} /><path d="M12 6h2v2h-2z" fill={B} /></Svg></QuickButton>
        <QuickButton aria-label="切换窗口"><Svg w={16} h={16}><path d="M7.500.500h8v7h-8zM9 2.500h5M9 4.500h5M.5 7.500h4l3 3v5h-7z" stroke={G} /><path d="M2 5c0-2 1.500-3 4-2.500M4.500.500L7 2.500 4.500 5" stroke={B} strokeWidth="1.300" /></Svg></QuickButton>
        <QuickButton $w={50} aria-label="自定义"><Svg w={5} h={6}><path d="M0 .5h5M0 3h5L2.500 5.500z" stroke="#f6f6f6" fill="#f6f6f6" strokeWidth=".8" /></Svg></QuickButton>
      </QuickBar>
      <RulerRow>
        <TabSelector aria-label="制表符"><Svg w={8} h={8}><path d="M1 0v7h7" stroke="#666" strokeWidth="2" /></Svg></TabSelector>
        <RulerTrack>
          <Ruler>
            <RulerNumbers $w={100} $ml={-5}>{[8, 6, 4, 2].map(n => <RulerCell key={n}>{n}</RulerCell>)}</RulerNumbers>
            <RulerNumbers $w={602} $ml={25}>{evens(24).map(n => <RulerCell key={n}>{hiddenByGallery(n) ? null : n}</RulerCell>)}</RulerNumbers>
            <IndentMark><Svg w={11} h={28}><path d="M.5.500h10v4l-5 5-5-5zM5.500 12.500l5 5v4H.5v-4zM.5 21.500h10v6H.5z" fill="#fff" stroke="#888" /></Svg></IndentMark>
          </Ruler>
        </RulerTrack>
      </RulerRow>
      <Workspace>
        <VRuler>
          <VMargin>
            <VMarginNumbers>
              <VCell><Tick $blank /><VNum>4</VNum><Tick /></VCell>
              <VCell><Tick /><VNum>2</VNum><Tick /></VCell>
            </VMarginNumbers>
            <Tick />
          </VMargin>
          <VScale>
            <Tick />
            <VNumbers $h={670}>
              {evens(18).map(n => <VCell key={n}><Tick /><VNum>{n}</VNum><Tick /></VCell>)}
            </VNumbers>
          </VScale>
        </VRuler>
        <Canvas><DocumentPage /></Canvas>
      </Workspace>
      <StatusBar>
        <StatusText $gap={24}>第 6 页，共 6 页</StatusText>
        <StatusText $gap={31}>1398 个字</StatusText>
        <StatusText $gap={19}>修订: 关闭</StatusText>
        <StatusText $gap={17}>插入</StatusText>
        <Svg w={13} h={12}><path d="M6 1.500h6.500v10h-11V7" stroke={G} /><path d="M6 2h7v2H6z" fill={G} /><circle cx="3" cy="3" r="3" fill={G} /><path d="M3.500 6.500h7M3.500 8.500h7M3.500 10h7" stroke={G} strokeDasharray="2 1" /></Svg>
        <ViewButtons>
          <ViewButton aria-label="阅读视图"><Svg w={14} h={12}><path d="M.5 1.500h5l1.500 1 1.500-1h5v9h-5L7 11.500l-1.500-1h-5zM7 2v10M2 4h3M2 6h3M2 8h3M9 4h3M9 6h3M9 8h3" stroke={G} /></Svg></ViewButton>
          <ViewButton $on aria-label="页面视图"><Svg w={14} h={12}><path d="M.5.500h13v11H.5zM2 2.500h10M2 4.500h10M2 6.500h10M2 8.500h10" stroke={G} /></Svg></ViewButton>
          <ViewButton aria-label="Web 版式"><Svg w={14} h={12}><path d="M6 11.500H.5V.500h11V4M2 2.500h8M2 4.500h6M2 6.500h4M2 8.500h3" stroke={G} /><circle cx="10" cy="8.500" r="3.500" fill="#eee" stroke={G} /><path d="M8 7l3 1-1 3M10 5l3 3" stroke={G} strokeWidth="1.500" /></Svg></ViewButton>
        </ViewButtons>
        <ZoomButton aria-label="缩小"><Svg w={6} h={2}><path d="M0 1h6" stroke="#555" strokeWidth="2" /></Svg></ZoomButton>
        <ZoomRange type="range" aria-label="缩放" min={0} max={100} defaultValue={45} />
        <ZoomButton aria-label="放大"><Svg w={8} h={8}><path d="M0 4h8M4 0v8" stroke="#555" strokeWidth="2" /></Svg></ZoomButton>
        <ZoomValue>90%</ZoomValue>
      </StatusBar>
      <SiteMark>
        <svg width="42" height="40" viewBox="0 0 42 40" fill="none">
          <defs>
            <linearGradient id="swirlTop" x1="0" y1="1" x2="1" y2="0"><stop offset="0" stopColor="#3b6fc4" /><stop offset="1" stopColor="#7fd0f0" /></linearGradient>
            <linearGradient id="swirlBottom" x1="0" y1="1" x2="1" y2="0"><stop offset="0" stopColor="#f2e24a" /><stop offset=".5" stopColor="#7cc46a" /><stop offset="1" stopColor="#3fb59a" /></linearGradient>
          </defs>
          <path d="M42 0C22-1 2 10 0 23c-.5 6 4 10 9 9-6-6 1-20 33-32z" fill="url(#swirlTop)" />
          <path d="M22 15c8-3 18-1 18 6 0 9-14 19-37 18 16-4 24-11 24-17 0-3-2-5-6-5z" fill="url(#swirlBottom)" />
          <path d="M26 16c-9-3-20 3-19 9 1 5 10 4 15 0-5 2-10 2-10-1 0-4 7-8 14-8z" fill="#5b8fd0" />
        </svg>
        <SiteText><SiteName>极光下载站</SiteName><SiteUrl>www.xz7.com</SiteUrl></SiteText>
      </SiteMark>
    </Shell>
  );
}
